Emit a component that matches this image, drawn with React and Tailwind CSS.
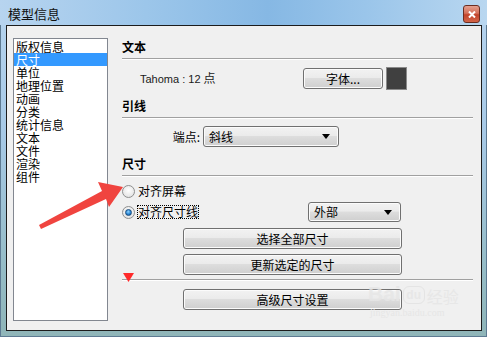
// 模型信息 对话框（尺寸页）
const CJK = "font-['Noto_Sans_CJK_SC',sans-serif]";

const ITEMS = ["版权信息", "尺寸", "单位", "地理位置", "动画", "分类", "统计信息", "文本", "文件", "渲染", "组件"];

function Btn({ children, className = "" }) {
  return (
    <div
      className={`flex items-center justify-center h-[21px] rounded-[3px] border border-[#707070] bg-[linear-gradient(#f2f2f2,#ebebeb_45%,#dddddd_50%,#cfcfcf)] shadow-[inset_0_0_0_1px_#fbfbfb] text-[12px] leading-none text-black ${className}`}
    >
      {children}
    </div>
  );
}

function Select({ value, className = "" }) {
  return (
    <div
      className={`flex items-center justify-between pl-[5px] pr-[8px] rounded-[3px] border border-[#707070] bg-[linear-gradient(#f2f2f2,#ebebeb_45%,#dddddd_50%,#cfcfcf)] shadow-[inset_0_0_0_1px_#fbfbfb] text-[12px] leading-none text-black ${className}`}
    >
      <span>{value}</span>
      <svg width="8" height="5" viewBox="0 0 8 5">
        <path d="M0 0h8L4 5z" fill="#000" />
      </svg>
    </div>
  );
}

function Heading({ children, className = "" }) {
  return (
    <>
      <div className={`h-[16px] leading-[16px] text-[12px] font-bold text-black ${className}`}>{children}</div>
      <div className="mt-[3px] h-[2px] border-t border-t-[#a0a0a0] border-b border-b-white" />
    </>
  );
}

function Radio({ checked }) {
  return (
    <div className="w-[13px] h-[13px] rounded-full border border-[#8e8f8f] bg-[radial-gradient(circle_at_50%_40%,#ffffff,#dcdcdc)] flex items-center justify-center shrink-0">
      {checked && (
        <div className="w-[7px] h-[7px] rounded-full border border-[#1b4d7e] bg-[radial-gradient(circle_at_45%_35%,#8fd3ff,#2a86d4_55%,#0b4a8a)]" />
      )}
    </div>
  );
}

export default function App() {
  return (
    <div
      className={`relative w-[487px] h-[337px] overflow-hidden flex flex-col bg-[linear-gradient(#b6d4ef,#a7c9e6_40%,#95bcc6_80%,#8fb5b8)] shadow-[inset_0_0_0_1px_#5d7a92] ${CJK}`}
    >
      {/* 标题栏 */}
      <div className="h-[25px] shrink-0 flex items-center justify-between pl-[8px] pr-[7px] bg-[linear-gradient(90deg,#b7d4ef,#9cc6ea_30%,#86b8e4_55%,#9ac5ea_75%,#b9d7f0)]">
        <span className="text-[13px] leading-none text-[#111] pt-[1px]">模型信息</span>
        <div className="w-[17px] h-[18px] mt-[3px] rounded-[3px] border border-[#6b2e22] bg-[linear-gradient(#e4a08f,#d4705a_45%,#c2432a_55%,#d3664a)] flex items-center justify-center">
          <svg width="8" height="7" viewBox="0 0 8 7">
            <path d="M1 0.5L7 6.5M7 0.5L1 6.5" stroke="#fff" strokeWidth="2" />
          </svg>
        </div>
      </div>

      {/* 内容区 */}
      <div className="ml-[6px] w-[476px] h-[306px] border border-[#1c1c1c] bg-[#f0f0f0] flex items-start pl-[6px] pt-[12px]">
        {/* 左侧列表 */}
        <div className="w-[95px] h-[283px] shrink-0 border border-[#828790] bg-white pt-[1px]">
          {ITEMS.map((it) => (
            <div
              key={it}
              className={`h-[13px] leading-[13px] pl-[2px] text-[12px] ${it === "尺寸" ? "bg-[#3399ff] text-white" : "text-black"}`}
            >
              {it}
            </div>
          ))}
        </div>

        {/* 右侧 */}
        <div className="ml-[14px] w-[351px] flex flex-col pt-[1px]">
          <Heading>文本</Heading>
          <div className="mt-[7px] h-[23px] flex items-center">
            <span className="w-[181px] pl-[18px] text-[11px] text-[#1a1a1a] font-['Liberation_Sans',sans-serif]">
              Tahoma : 12 <span className={`text-[12px] ${CJK}`}>点</span>
            </span>
            <Btn className="w-[80px]">字体...</Btn>
            <div className="ml-[3px] w-[21px] h-[23px] border border-[#8a8a8a] bg-[#404040]" />
          </div>

          <Heading className="mt-[8px]">引线</Heading>
          <div className="mt-[7px] flex items-center">
            <span className="w-[81px] text-right pr-[3px] text-[12px] text-black">端点:</span>
            <Select value="斜线" className="w-[136px] h-[21px]" />
          </div>

          <Heading className="mt-[9px]">尺寸</Heading>
          <div className="mt-[6px] h-[16px] flex items-center gap-[3px]">
            <Radio />
            <span className="text-[12px] text-black">对齐屏幕</span>
          </div>
          <div className="mt-[3px] h-[20px] flex items-center">
            <div className="w-[186px] flex items-center gap-[2px]">
              <Radio checked />
              <span className="text-[12px] leading-[12px] text-black border border-dotted border-black">对齐尺寸线</span>
            </div>
            <Select value="外部" className="w-[93px] h-[20px]" />
          </div>

          <Btn className="mt-[6px] ml-[61px] w-[219px]">选择全部尺寸</Btn>
          <Btn className="mt-[5px] ml-[61px] w-[219px]">更新选定的尺寸</Btn>
          <div className="mt-[4px] h-[2px] border-t border-t-[#a0a0a0] border-b border-b-white" />
          <Btn className="mt-[8px] ml-[61px] w-[219px]">高级尺寸设置</Btn>
        </div>
      </div>

      {/* 百度经验水印 */}
      <div className="absolute left-[368px] top-[283px] flex items-end gap-[2px] text-[#e6e6e6] opacity-80 pointer-events-none">
        <span className="text-[21px] font-bold leading-none font-['Liberation_Sans',sans-serif]">Bai</span>
        <span className="w-[22px] h-[18px] rounded-[6px] border border-[#e2e2e2] text-[12px] font-bold leading-[16px] text-center font-['Liberation_Sans',sans-serif]">du</span>
        <span className="text-[16px] leading-none">经验</span>
      </div>
      <div className="absolute left-[370px] top-[308px] text-[10px] leading-none text-[#e6e6e6] font-['Liberation_Serif',serif] pointer-events-none">
        jingyan.baidu.com
      </div>

      {/* 红色标注 */}
      <svg className="absolute left-0 top-0 pointer-events-none" width="487" height="337" viewBox="0 0 487 337">
        <polygon points="123,187 98,182 102,191 39,225 41,229 106,199 109,207" fill="#f0443f" />
        <polygon points="123,273 134,273 128.5,282" fill="#ff2a2a" />
      </svg>
    </div>
  );
}
